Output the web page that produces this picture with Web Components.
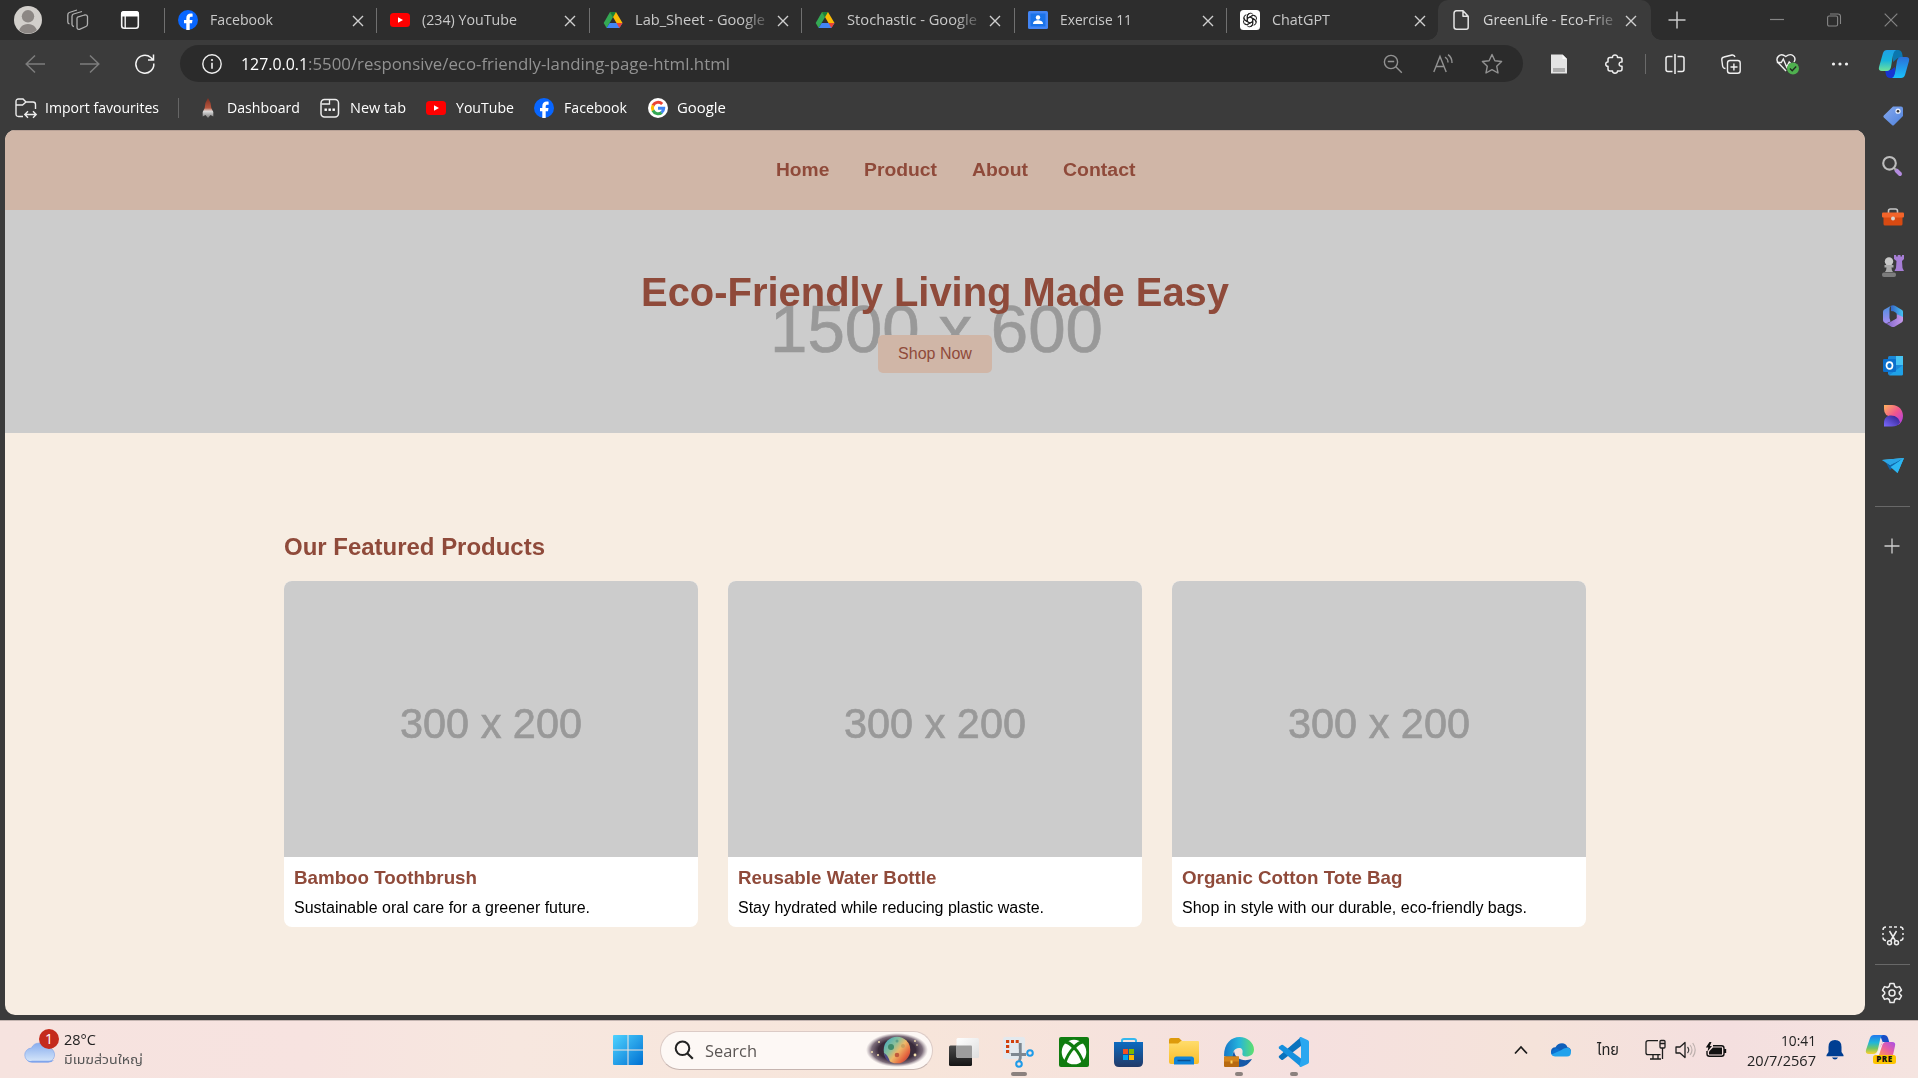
<!DOCTYPE html>
<html lang="en">
<head>
<meta charset="utf-8">
<title>GreenLife - Eco-Friendly Living</title>
<style>
html,body{margin:0;padding:0;height:100%;overflow:hidden;background:#3b3b3b}
body{font-family:"Open Sans","Noto Sans",sans-serif}
</style>
</head>
<body>
<desktop-screen></desktop-screen>
<script>
const ICONS = {
avatar:[28,28,`<defs><clipPath id="c"><circle cx="14" cy="14" r="13.500"/></clipPath></defs><circle cx="14" cy="14" r="14" fill="#d2cfcb"/><g clip-path="url(#c)" fill="#8c8784"><circle cx="14" cy="10.300" r="6.200"/><path d="M4.500 28c0-6 4-10 9.500-10s9.500 4 9.500 10z"/></g>`],
workspaces:[22,22,`<g fill="none" stroke="#b0b0b0" stroke-width="1.300" stroke-linejoin="round"><path d="M10.500 8.200l7-2.200q2.500-.5 3 1.500v7.500q0 2-1.500 2.500l-6.500 2.800q-2.500.500-2.500-2V9.500q0-1 .5-1.300z"/><path d="M7 17.500q-2-.3-2-2V7.500q0-2 1.500-2.500l8.500-2.500"/><path d="M2.500 15Q.8 14.500.8 13V6Q.8 4 2.300 3.500L10 1"/></g>`],
tabact:[20,20,`<rect x="1.700" y="1.700" width="16.600" height="16.600" rx="2.500" fill="none" stroke="#f5f5f5" stroke-width="1.600"/><path d="M1 4Q1 1 4 1h12q3 0 3 3v2.500H1z" fill="#fff"/><path d="M5.200 6v12" stroke="#f5f5f5" stroke-width="1.400"/>`],
facebook:[20,20,`<circle cx="10" cy="10" r="10" fill="#0866ff"/><path d="M8.300 20v-6.800H6v-3.200h2.300V8.600c0-3.500 1.600-5 4.800-5 .6 0 1.200.1 1.500.2v2.900h-1.100c-1.400 0-1.800.5-1.800 1.900V10h2.800l-.5 3.200h-2.300V20z" fill="#fff"/>`],
youtube:[20,20,`<rect x="0" y="3" width="20" height="14" rx="3.500" fill="#f00"/><path d="M8 7.200v5.600l5-2.800z" fill="#fff"/>`],
drive:[20,20,`<path d="M7 2h6l6.500 11h-6z" fill="#fbbc04"/><path d="M7 2l3 5.200L3.600 18 .7 13z" fill="#34a853"/><path d="M3.600 18l3.100-5h12.800l-3.100 5z" fill="#4285f4"/><path d="M13.500 13h6l-3.100 5z" fill="#ea4335"/><path d="M7 2h6l-3 5.200z" fill="#188038"/>`],
classroom:[20,20,`<rect y="1" width="20" height="18" rx="1.500" fill="#4285f4"/><rect x="2.500" y="3.500" width="15" height="13" fill="#1a73e8"/><circle cx="10" cy="7.500" r="2.200" fill="#fff"/><path d="M5 14c0-3 3-3.700 5-3.700s5 .7 5 3.700z" fill="#fff"/>`],
gpt:[20,20,`<rect width="20" height="20" rx="3.500" fill="#fff"/><g fill="none" stroke="#222" stroke-width="1" stroke-linejoin="round"><path id="p" d="M7.300 11.600V6.300q0-3 2.900-3.100 1.600 0 2.600 1.100M7.300 8.400l4.300-2.500q2-1 3.500.3"/><use href="#p" transform="rotate(60 10 10)"/><use href="#p" transform="rotate(120 10 10)"/><use href="#p" transform="rotate(180 10 10)"/><use href="#p" transform="rotate(240 10 10)"/><use href="#p" transform="rotate(300 10 10)"/></g>`],
page:[16,20,`<path d="M3.500.8H10l5.200 5.400v11q0 2-2 2h-9.700q-2.500 0-2.500-2.500v-13Q1 .8 3.500.8zM10 .8v5.400h5.200" fill="none" stroke="#e4e4e4" stroke-width="1.500" stroke-linejoin="round"/>`],
close:[12,12,`<path d="M1 1l10 10M11 1L1 11" stroke="#cfcfcf" stroke-width="1.400"/>`],
plus:[18,18,`<path d="M9 .5v17M.5 9h17" stroke="#c9c9c9" stroke-width="1.500"/>`],
min:[14,14,`<path d="M0 6.500h14" stroke="#858585" stroke-width="1.200"/>`],
restore:[14,14,`<path d="M.6 4.500q0-1.500 1.500-1.500h7q1.500 0 1.500 1.500v7q0 1.500-1.500 1.500h-7Q.6 13 .6 11.500zM3 1h8q2.500 0 2.500 2.500V11" fill="none" stroke="#858585" stroke-width="1.100"/>`],
wclose:[14,14,`<path d="M.7.7l12.600 12.600M13.300.7L.7 13.300" stroke="#858585" stroke-width="1.200"/>`],
back:[20,20,`<path d="M20 10H1.500M10 1.500L1.200 10l8.800 8.500" fill="none" stroke="#7d7d7d" stroke-width="1.500"/>`],
fwd:[20,20,`<path d="M0 10h18.500M10 1.500l8.800 8.500-8.800 8.500" fill="none" stroke="#7d7d7d" stroke-width="1.500"/>`],
refresh:[20,20,`<path d="M18.800 9.500a9 9 0 1 1-3-6l2.200 2.200M18.500.5V6h-5.500" fill="none" stroke="#f4f4f4" stroke-width="1.500"/>`],
info:[20,20,`<circle cx="10" cy="10" r="9.200" fill="none" stroke="#efefef" stroke-width="1.400"/><path d="M10 8.800v6" stroke="#efefef" stroke-width="1.600"/><circle cx="10" cy="6" r="1.100" fill="#efefef"/>`],
zoomout:[20,20,`<g fill="none" stroke="#929292" stroke-width="1.400"><circle cx="8" cy="8" r="6.600"/><path d="M12.800 12.800l6 6M4.800 7.500h6.400"/></g>`],
read:[20,20,`<g fill="none" stroke="#929292" stroke-width="1.400"><path d="M.8 18L7 2.500 13.200 18M3 12.500h8M12 3q3 1.800 3 5.500M15 .6q4 2.600 4 8.400"/></g>`],
star:[22,22,`<path d="M11 1.500l2.900 6.200 6.700.8-4.900 4.700 1.300 6.800-6-3.300L5 20l1.300-6.800-4.900-4.700 6.700-.8z" fill="none" stroke="#929292" stroke-width="1.400" stroke-linejoin="round"/>`],
doc:[18,20,`<path d="M1 .5h11.500L17 5v14.500H1z" fill="#e4e4e4"/><path d="M12.500.5V5H17z" fill="#fafafa"/><path d="M3 15h12M3 17h12" stroke="#777" stroke-width="1"/>`],
puzzle:[20,20,`<path d="M5 3.500h2.500c-.3-3.500 5.300-3.500 5 0H15q2 0 2 2V8c-3.800-.5-3.800 4.800 0 4.300V15q0 2-2 2h-2.500c.3 3-5.300 3-5 0H5q-2 0-2-2v-2.700c-3 .3-3-4.600 0-4.300V5.500q0-2 2-2z" fill="none" stroke="#f0f0f0" stroke-width="1.500" stroke-linejoin="round"/>`],
split:[20,20,`<path d="M7.500 2.500H3q-2 0-2 2v11q0 2 2 2h4.500M12.500 2.500H17q2 0 2 2v11q0 2-2 2h-4.500M10 0v20" fill="none" stroke="#f0f0f0" stroke-width="1.500"/>`],
collect:[20,20,`<g fill="none" stroke="#f0f0f0" stroke-width="1.400"><rect x="6.500" y="6.500" width="12.700" height="12.700" rx="2.500"/><path d="M12.900 9.500v7M9.500 13h7M4.500 14.500Q2 14.500 1.600 12L.8 6Q.5 3.500 3 3l8-2q2.300-.3 3 2"/></g>`],
heart:[23,22,`<path d="M10 18L2 9.500C-1 5 4-1 9.800 3.500 15.500-1 21 4 18 9M.8 9.500h4.500l2-3.500 3.400 8 2.500-5 1.500 1.500" fill="none" stroke="#f0f0f0" stroke-width="1.400"/><circle cx="17" cy="15.500" r="6" fill="#4fb04f"/><path d="M14 15.500l2.200 2.200 4-4.200" fill="none" stroke="#1f2b1f" stroke-width="1.400"/>`],
dots:[18,6,`<g fill="#f0f0f0"><circle cx="2.500" cy="3" r="1.600"/><circle cx="9" cy="3" r="1.600"/><circle cx="15.500" cy="3" r="1.600"/></g>`],
copilot:[30,28,`<defs><linearGradient id="a" x1="0" y1="0" x2="0" y2="1"><stop stop-color="#1f9fe6"/><stop offset=".5" stop-color="#18b4dc"/><stop offset="1" stop-color="#6fe39a"/></linearGradient><linearGradient id="b" x1="0" y1="0" x2="0" y2="1"><stop stop-color="#2b6fd8"/><stop offset="1" stop-color="#19c1fb"/></linearGradient></defs><path d="M14 0h5q3 0 4 3l1 5h-5l-5 4z" fill="#0b76ae"/><path d="M16 28H11q-3 0-4-3l-1-5h6l4-3z" fill="#1735d0"/><path d="M8 0h9q-2 1-2.800 4L12 17q-1 4-4 4H3q-4 0-3-4L4 3q1-3 4-3z" fill="url(#a)"/><path d="M22 28H13q2-1 2.800-4L18 11q1-4 4-4h5q4 0 3 4l-4 14q-1 3-4 3z" fill="url(#b)"/>`],
importf:[22,20,`<path d="M8 18.500H3.500q-2.500 0-2.500-2.500V3.500Q1 1 3.500 1H8l3 3h7q2.500 0 2.500 2.500V11M1 7h6.500L11 4" fill="none" stroke="#ececec" stroke-width="1.400"/><path d="M10 16.500h11M13 13.300l-3.200 3.200 3.200 3.200M18 13.300l3.200 3.200-3.200 3.200" fill="none" stroke="#ececec" stroke-width="1.400"/>`],
rocket:[14,20,`<defs><linearGradient id="a" x1="0" y1="0" x2="0" y2="1"><stop stop-color="#7e2f22"/><stop offset=".5" stop-color="#b9573f"/><stop offset=".66" stop-color="#ddd"/><stop offset="1" stop-color="#777"/></linearGradient></defs><path d="M7 0q3 4 3.300 10l2 4v4.500L9.500 17 7 20l-2.500-3-2.800 1.500V14l2-4Q4 4 7 0z" fill="url(#a)"/>`],
newtab:[20,20,`<rect x="1" y="1.500" width="17.500" height="17.500" rx="3.500" fill="none" stroke="#ececec" stroke-width="1.500"/><path d="M1.500 6h8v-4" fill="none" stroke="#ececec" stroke-width="1.300"/><g fill="#fff"><rect x="4.500" y="10.500" width="2.400" height="2.400"/><rect x="8.500" y="10.500" width="2.400" height="2.400"/><rect x="12.500" y="10.500" width="2.400" height="2.400"/></g>`],
google:[20,20,`<circle cx="10" cy="10" r="10" fill="#fff"/><g fill="none" stroke-width="3"><path d="M14.200 6A5.700 5.700 0 0 0 5 7.500" stroke="#ea4335"/><path d="M5.100 7.300a5.700 5.700 0 0 0 0 5.400" stroke="#fbbc04"/><path d="M5 12.500a5.700 5.700 0 0 0 8.700 2" stroke="#34a853"/><path d="M10 10.200h5.700a5.700 5.700 0 0 1-2.200 4.400" stroke="#4285f4"/></g>`],
tag:[20,20,`<defs><linearGradient id="a" x1="0" y1="0" x2="1" y2="1"><stop stop-color="#86a9ee"/><stop offset="1" stop-color="#4f82dc"/></linearGradient></defs><path d="M10 .5h8q2 0 2 2V10L11 19q-1 1-2 0L.8 11.500q-1-1 0-2z" fill="url(#a)"/><circle cx="15" cy="5.200" r="2.600" fill="#e8eefb"/><circle cx="15" cy="5.200" r="1.300" fill="#333"/>`],
search3:[20,20,`<path d="M14.500 14.500l3.500 3.500" stroke="#b48be0" stroke-width="4" stroke-linecap="round"/><path d="M12 12l2 2" stroke="#aaa" stroke-width="2"/><circle cx="7.500" cy="7.300" r="6.300" fill="none" stroke="#bdbdbd" stroke-width="2.100"/>`],
toolbox:[22,18,`<path d="M6.500 5V3q0-2 2-2h5q2 0 2 2v2" fill="none" stroke="#c6c6c6" stroke-width="1.600"/><rect x="1.500" y="7" width="19" height="10.500" rx="1.500" fill="#d84a12"/><rect x="0" y="4.500" width="22" height="5" rx="1" fill="#f2642a"/><circle cx="11" cy="10.500" r="2" fill="#d9d4cf"/>`],
chess:[22,22,`<path d="M12 0h2.200v1.500h1.500V0h2.800v1.500H20V0h2v4l-2 2 .5 7 1.500 3h-9.500l1.500-3 .5-7-2.500-2z" fill="#a77ed6"/><circle cx="7" cy="6.500" r="4.200" fill="#c8c8c8"/><path d="M2.500 10h9v2.500H9.500q0 3 1.500 4.500H3q1.500-1.500 1.500-4.500h-2z" fill="#aaa"/><rect x="0" y="17.500" width="14" height="4.500" rx="2" fill="#7c7c7c"/>`],
m365:[20,22,`<defs><linearGradient id="a"><stop stop-color="#3566c8"/><stop offset="1" stop-color="#45c3f2"/></linearGradient><linearGradient id="b" x1="0" y1="0" x2="0" y2="1"><stop stop-color="#4a90e0"/><stop offset="1" stop-color="#a88cf0"/></linearGradient><linearGradient id="d"><stop stop-color="#7a62c8"/><stop offset="1" stop-color="#c79aec"/></linearGradient></defs><path d="M8 .8q2-1.300 4 0l7 4.200q1 .6 1 2V13l-6-3.500L12 7 8 6z" fill="url(#a)"/><path d="M8 .8Q6.500 2 6.500 4v9l1 3.500L3 18.500l-2-1.200Q0 16.500 0 15V7q0-1.500 1-2.200z" fill="url(#b)"/><path d="M20 12v3q0 1.500-1 2.200l-7 4.200q-2 1-4 0l-5.500-3.200q2 .5 3.500-.5L13.500 13.500V9z" fill="url(#d)"/><path d="M7 8l3-1.800 3.500 2.200v4.500L10 15l-3-2z" fill="#3b3b3b"/>`],
outlook:[20,20,`<rect x="5" y="0" width="15" height="19" rx="1.500" fill="#1a88d8"/><rect x="13" y="0" width="7" height="9" fill="#46c4f4"/><path d="M20 9v9q0 1.500-1.500 1.500H6z" fill="#1fa2e8"/><rect x="0" y="3" width="13" height="13" rx="1.200" fill="#0b6fcc"/><ellipse cx="6.500" cy="9.500" rx="3" ry="3.400" fill="none" stroke="#fff" stroke-width="1.700"/>`],
designer:[20,22,`<defs><linearGradient id="a" x1="0" y1="0" x2="1" y2="1"><stop stop-color="#ffb35c"/><stop offset=".5" stop-color="#f0568d"/><stop offset="1" stop-color="#a93cf0"/></linearGradient><linearGradient id="b" x1="1" y1="0" x2="0" y2="1"><stop stop-color="#2a1b86"/><stop offset="1" stop-color="#7c6bff"/></linearGradient></defs><path d="M1 0h8c7 0 11 5 11 11 0 4-2 7-4.500 9L12 11.500H9Q1 11.500 1 4z" fill="url(#a)"/><path d="M1 21.500V18c0-5 3-7.500 7-7.500 5 0 8 3 9 7-2 3-4.500 4-8 4z" fill="url(#b)"/>`],
send:[22,16,`<path d="M0 2L22 0l-9 5.500z" fill="#4fd0f8"/><path d="M0 2l8 5.500 14-7.500z" fill="#2aa5e6"/><path d="M8 7.500L22 0 15.500 15z" fill="#2cb6f2"/><path d="M4 5l4 2.500 12-6.500L8 12z" fill="#0c62a8"/><path d="M8.500 9L22 0 15.500 15z" fill="#2cb6f2"/>`],
railplus:[16,16,`<path d="M8 .5v15M.5 8h15" stroke="#d0d0d0" stroke-width="1.300"/>`],
snipweb:[22,20,`<g fill="none" stroke="#ececec" stroke-width="1.500"><path d="M4 14.500q-3 0-3-3M1 9V7M1 4q0-3 3-3M7 1h3M12 1h3M18 1q3 0 3 3M21 7v2M21 11.500q0 3-3 3M7.500 5l6 10M14.500 5l-6 10"/><circle cx="7.500" cy="16.700" r="2"/><circle cx="14.500" cy="16.700" r="2"/></g>`],
gear:[22,22,`<path d="M9 1.500h4l.8 3 1.700 1 3-.9 2 3.500-2.200 2.100v1.600l2.200 2.100-2 3.500-3-.9-1.700 1-.8 3H9l-.8-3-1.700-1-3 .9-2-3.500 2.200-2.100v-1.600L1.500 8.100l2-3.500 3 .9 1.700-1z" fill="none" stroke="#ececec" stroke-width="1.500" stroke-linejoin="round"/><circle cx="11" cy="11" r="3" fill="none" stroke="#ececec" stroke-width="1.500"/>`],
weather:[34,36,`<defs><linearGradient id="a" x1="0" y1="0" x2="0" y2="1"><stop stop-color="#88adee"/><stop offset="1" stop-color="#d7e7fa"/></linearGradient></defs><circle cx="23" cy="17" r="6" fill="#f08a24"/><g transform="translate(1 -3.500)"><path d="M7 30.500a7 7 0 0 1-.5-14A8 8 0 0 1 21 16a7.300 7.300 0 0 1 2.500 14.500z" fill="url(#a)" stroke="#7ea3ea" stroke-width=".6"/><path d="M2 29q2 2 5 2h16q4 0 6-2.500-2 .8-5 .8H7Q4 29.800 2 29z" fill="#7fa4ec"/></g>`],
windows:[30,30,`<defs><linearGradient id="a" x1="0" y1="0" x2="1" y2="1"><stop stop-color="#4fd3ff"/><stop offset="1" stop-color="#0070d2"/></linearGradient></defs><path d="M0 1q0-1 1-1h13.500v14.500H0zM15.500 0H29q1 0 1 1v13.500H15.500zM0 15.500h14.500V30H1q-1 0-1-1zM15.500 15.500H30V29q0 1-1 1H15.500z" fill="url(#a)"/>`],
mag:[20,20,`<circle cx="8.500" cy="8.300" r="6.800" fill="none" stroke="#222" stroke-width="2"/><path d="M13.200 13.200l5.600 5.600" stroke="#222" stroke-width="2.200"/>`],
planet:[62,34,`<defs><radialGradient id="a"><stop offset=".6" stop-color="#3a2b3b"/><stop offset=".82" stop-color="#5c4a5c" stop-opacity=".8"/><stop offset="1" stop-color="#8a7a85" stop-opacity="0"/></radialGradient><linearGradient id="b" x1="0" y1=".1" x2="1" y2=".9"><stop stop-color="#3fa8c0"/><stop offset=".35" stop-color="#8cc09a"/><stop offset=".55" stop-color="#efb868"/><stop offset=".8" stop-color="#e5663f"/><stop offset="1" stop-color="#9c3440"/></linearGradient></defs><rect width="62" height="34" rx="17" fill="url(#a)"/><circle cx="31" cy="17" r="13.300" fill="url(#b)"/><path d="M18 20q4 2 6 9-5-2-6-9z" fill="#4d4a86"/><circle cx="25" cy="14" r="3" fill="#3f8a6a"/><circle cx="37" cy="13" r="2" fill="#c9a05f"/><circle cx="31" cy="22" r="2.300" fill="#c05a3c"/><circle cx="31" cy="8" r="1.500" fill="#5fa08a"/><g fill="#f6e2b0"><circle cx="13" cy="9" r="1"/><circle cx="6" cy="19" r="1"/><circle cx="12" cy="22" r="1"/><circle cx="49" cy="8" r="1"/><circle cx="49" cy="22" r="1.400"/><circle cx="51" cy="12" r=".8"/></g>`],
taskview:[30,30,`<defs><linearGradient id="a" x1="0" y1="0" x2="0" y2="1"><stop stop-color="#4a4a4a"/><stop offset="1" stop-color="#151515"/></linearGradient><linearGradient id="b" x1="0" y1="0" x2="1" y2="1"><stop stop-color="#fff"/><stop offset="1" stop-color="#dedede"/></linearGradient></defs><rect x="0" y="8.500" width="23" height="20.500" rx="1.500" fill="url(#a)"/><rect x="7.500" y="1" width="22.500" height="20" rx="1.500" fill="url(#b)"/><path d="M7.500 8.500H22q1 0 1 1V21H9q-1.500 0-1.500-1.500z" fill="#9d9d9d"/>`],
snip:[32,30,`<rect x="0" y="0" width="22" height="22" rx="2" fill="#e3e9ee"/><g fill="#d2410c"><path d="M3 3h3.200v3H3zM8 3h3v3H8zM12.700 3h3v3h-3zM3 8h3.200v3H3zM3 13h3.200v3H3z"/></g><path d="M16 6v6M6 16.500h6" stroke="#c3c9ce" stroke-width="1"/><path d="M17.300 6v15l-1 3M8 17.500h15" stroke="#7d8790" stroke-width="2.800" fill="none"/><circle cx="27" cy="16" r="2.800" fill="none" stroke="#1e9be9" stroke-width="2"/><circle cx="16" cy="27" r="2.800" fill="none" stroke="#1e9be9" stroke-width="2"/>`],
xbox:[30,30,`<rect width="30" height="30" rx="2" fill="#107c10"/><circle cx="15" cy="15" r="12.300" fill="#fff"/><path d="M5 4.500Q10 5 15 10.500 20 5 25 4.500" fill="none" stroke="#107c10" stroke-width="3.600"/><path d="M5.500 27Q8.500 17 15 10.500 21.500 17 24.500 27" fill="none" stroke="#107c10" stroke-width="3"/>`],
store:[30,30,`<defs><linearGradient id="a" x1="0" y1="0" x2="0" y2="1"><stop stop-color="#0d6bc0"/><stop offset="1" stop-color="#223a68"/></linearGradient></defs><path d="M8 6V3.500q0-1.500 2-1.500h10q2 0 2 1.500V6" fill="none" stroke="#35b8ee" stroke-width="2"/><path d="M0 5h29v20q0 5-5 5H5q-5 0-5-5z" fill="url(#a)"/><path d="M9 12h5v5H9z" fill="#f25022"/><path d="M15 12h5v5h-5z" fill="#7fba00"/><path d="M9 18h5v5H9z" fill="#00a4ef"/><path d="M15 18h5v5h-5z" fill="#ffb900"/>`],
explorer:[30,28,`<defs><linearGradient id="a" x1="0" y1="0" x2="0" y2="1"><stop stop-color="#ffdc6c"/><stop offset="1" stop-color="#f9bd28"/></linearGradient></defs><path d="M0 3q0-2 2-2h8l3 3v4H0z" fill="#dd9a0b"/><path d="M0 6.500h9l3-2.500h17q1 0 1 1v20q0 2-2 2H2q-2 0-2-2z" fill="url(#a)"/><path d="M5 27.500V22q0-2.500 2.500-2.500h15Q25 19.500 25 22v5.500z" fill="#1083d8"/><path d="M8.500 23.500h13" stroke="#0b4f8e" stroke-width="1.500"/>`],
edge:[30,30,`<defs><linearGradient id="a"><stop stop-color="#1677c8"/><stop offset=".5" stop-color="#25b4dc"/><stop offset="1" stop-color="#5fe06c"/></linearGradient></defs><path d="M0 19C0 6 7.500 0 15.500 0S30 6 30 12.500c0 5-4 7-7.500 7S18 18 18.500 16C19 13 18 11 15 11c-5 0-8 5-5 12z" fill="url(#a)"/><path d="M10 14c1 8 9 11 18 8-3 5-7.500 8-12.500 8C8 30 7 20 10 14z" fill="#1559a8"/><rect x="0" y="19.500" width="15" height="10.500" rx="1" fill="#b86a10"/><path d="M0 19.500h15v5H0z" fill="#d3841c"/><rect x="6.500" y="23.500" width="2" height="3" fill="#ffd45c"/>`],
vscode:[30,30,`<path d="M22 0L0 19q-.8 1 .3 2l2 1.700q.8.500 1.700 0L22 9z" fill="#0a72bd"/><path d="M22 30L0 11.500q-.8-1 .3-2L2.300 8q.8-.5 1.700 0L22 21.500z" fill="#1590de"/><path d="M22 0l7 3.300q1 .5 1 1.700v20q0 1.200-1 1.700L22 30q-1 .3-1.500-.8L22 22V8L20.500.8Q21-.3 22 0z" fill="#2aa7f0"/>`],
chevron:[14,10,`<path d="M1 8.500l6-6.500 6 6.500" fill="none" stroke="#1b1b1b" stroke-width="1.700"/>`],
onedrive:[20,14,`<path d="M5 12.500Q0 12.500 0 8.500T4.500 4.300Q6.500.3 11 .3q4 0 5.500 3.900Q20 5 20 8.500z" fill="#0f5fba"/><path d="M3 13q-3-.6-3-4l5-4 13 7z" fill="#0a6fd0"/><path d="M4 13.500q-2 0-3.500-2L10 7.300q3-3 7-2.600 3 .8 3 4.300 0 4.500-4 4.500z" fill="#22a2ec"/>`],
netw:[22,22,`<g fill="none" stroke="#1d1d1d" stroke-width="1.300"><path d="M13 1.700H3q-2 0-2 2v10q0 2 2 2h12.500M5 20h11M8 16v4M13 16v4"/><path d="M15 2.500q0-1 1-1h3q1 0 1 1V8q0 1-1 1h-3q-1 0-1-1zM15 4.500h5M17.500 9v11"/></g>`],
speaker:[22,18,`<path d="M1 6h4l5-4.500v15L5 12H1z" fill="none" stroke="#1d1d1d" stroke-width="1.300" stroke-linejoin="round"/><path d="M12.500 6q2.500 3 0 6" stroke="#444" fill="none" stroke-width="1.200"/><path d="M15 4q4 5 0 10M17.700 2q5 7 0 14" stroke="#bdb1ae" fill="none" stroke-width="1.200"/>`],
battery:[22,18,`<path d="M8 4.700h8.500q2.500 0 2.500 2.500v5.500q0 2.500-2.500 2.500h-12Q2 15.200 2 12.700V10" fill="none" stroke="#111" stroke-width="1.400"/><path d="M8 6.500h9v7H4v-3z" fill="#111"/><path d="M19 8h2.200v4H19z" fill="#111"/><path d="M4.500 1L.8 6.500h2.500L2.500 10.500l4.500-5.500H4.800L6.500 1z" fill="#111"/>`],
bell:[18,20,`<path d="M9 0q6.500 0 6.500 7v5l2 3v1.200H.5V15l2-3V7Q2.500 0 9 0z" fill="#003e92"/><path d="M6 17.500h6q-1 2-3 2t-3-2z" fill="#003e92"/>`],
pre:[30,30,`<defs><linearGradient id="a" x1="0" y1="0" x2="0" y2="1"><stop stop-color="#2278ee"/><stop offset=".4" stop-color="#1fb6d9"/><stop offset=".7" stop-color="#72c566"/><stop offset="1" stop-color="#ffd02b"/></linearGradient><linearGradient id="b" x1="1" y1="0" x2="0" y2="1"><stop stop-color="#a64fe8"/><stop offset=".5" stop-color="#e75fa5"/><stop offset="1" stop-color="#ff9a52"/></linearGradient></defs><path d="M14 0h4q3 0 4 3l1.500 5H17z" fill="#174ec6"/><path d="M8 0h9q-2 1-2.800 4L12 14q-1 5-5 5H3q-4 0-3-4L4 3q1-3 4-3z" fill="url(#a)"/><path d="M20 7h6q4 0 3 4l-2 9H12l3-10q1-3 5-3z" fill="url(#b)"/><path d="M17 7h3q-3 0-4 4l-3 9h-3z" fill="#f7f2f2"/><rect x="7" y="20" width="23" height="9" rx="2.500" fill="#fdc500"/><text x="18.500" y="27.400" font-family="Open Sans" font-weight="800" font-size="8" letter-spacing=".5" text-anchor="middle" fill="#111">PRE</text>`]
};

function define(name, css, html, setup) {
  customElements.define(name, class extends HTMLElement {
    connectedCallback() {
      if (this.shadowRoot) return;
      const root = this.attachShadow({ mode: "open" });
      const markup = typeof html === "function" ? html(this) : html;
      root.innerHTML = `<style>:host{display:block;box-sizing:border-box}*{box-sizing:border-box}${css}</style>${markup}`;
      if (setup) setup(this, root);
    }
  });
}
const icon = (name, ml = 0, extra = "") => `<ui-icon name="${name}" style="margin-left:${ml}px;${extra}"></ui-icon>`;
const fit = (w, text, ml = 0, extra = "") => `<fit-text w="${w}" style="margin-left:${ml}px;${extra}">${text}</fit-text>`;

/* Icon drawn from the shared glyph table */
define("ui-icon", `:host{flex:none;line-height:0}svg{display:block;overflow:visible}`, el => {
  const [w, h, body] = ICONS[el.getAttribute("name")];
  return `<svg width="${w}" height="${h}" viewBox="0 0 ${w} ${h}">${body}</svg>`;
});

define("browser-tab", `
:host{width:212.400px;height:40px;display:flex;align-items:center;flex:none;font-size:15px;color:#c9c9c9;position:relative}
.sep{width:1px;height:25px;background:#707070}
.icon{width:20px;margin-left:13px;display:flex;justify-content:center}
.label{width:131px;margin-left:12px;height:22px;line-height:20px;overflow:hidden;white-space:nowrap}
:host([fade]) .label{-webkit-mask:linear-gradient(90deg,#000 82%,rgba(0,0,0,.25));mask:linear-gradient(90deg,#000 82%,rgba(0,0,0,.25))}
ui-icon.x{margin-left:11px;margin-top:1px}
:host([active]){background:#3b3b3b;border-radius:10px 10px 0 0;color:#d6d6d6}
:host([active]) .sep{background:none}
:host([active]) .icon{margin-left:12px}
:host([active])::before,:host([active])::after{content:"";position:absolute;bottom:0;width:10px;height:10px}
:host([active])::before{left:-10px;background:radial-gradient(circle at 0 0,transparent 9.500px,#3b3b3b 10px)}
:host([active])::after{right:-10px;background:radial-gradient(circle at 100% 0,transparent 9.500px,#3b3b3b 10px)}
`, el => `<span class="sep"></span><span class="icon"><ui-icon name="${el.getAttribute("icon")}"></ui-icon></span><span class="label"><slot></slot></span><ui-icon class="x" name="close"></ui-icon>`);

define("tab-strip", `
:host{height:40px;background:#2d2d2d;display:flex;align-items:center}
.win{margin-left:auto;display:flex;gap:43px;padding-right:20px}
`, `${icon("avatar",14)}${icon("workspaces",25)}${icon("tabact",31)}<span style="width:24px"></span>
<browser-tab icon="facebook">${fit(63,"Facebook")}</browser-tab>
<browser-tab icon="youtube">${fit(95,"(234) YouTube")}</browser-tab>
<browser-tab icon="drive" fade>${fit(130,"Lab_Sheet - Google")}</browser-tab>
<browser-tab icon="drive" fade>${fit(130,"Stochastic - Google")}</browser-tab>
<browser-tab icon="classroom">${fit(72,"Exercise 11")}</browser-tab>
<browser-tab icon="gpt">${fit(58,"ChatGPT")}</browser-tab>
<browser-tab icon="page" active fade>${fit(130,"GreenLife - Eco-Frie")}</browser-tab>
${icon("plus",17.5)}<span class="win">${icon("min")}${icon("restore")}${icon("wclose")}</span>`);

define("address-bar", `
:host{width:1343px;height:37px;border-radius:19px;background:#2b2b2b;display:flex;align-items:center;margin-left:25px;flex:none;font-size:16.800px;color:#929292}
b{font-weight:400;color:#fff}
`, `${icon("info",22)}<b>${fit(67,"127.0.0.1",19)}</b>${fit(422,":5500/responsive/eco-friendly-landing-page-html.html")}
${icon("zoomout",653)}${icon("read",30)}${icon("star",28)}`);

define("tool-bar", `
:host{height:47px;display:flex;align-items:center}
.sep{width:1px;height:20px;background:#6a6a6a;margin-left:20px}
`, `${icon("back",25)}${icon("fwd",35)}${icon("refresh",35)}<address-bar></address-bar>
${icon("doc",27)}${icon("puzzle",37)}<span class="sep"></span>${icon("split",19)}${icon("collect",36)}${icon("heart",35)}${icon("dots",32)}${icon("copilot",29.5)}`);

define("bookmark-item", `
:host{display:flex;align-items:center;flex:none;color:#fff;font-size:15px}
.t{padding-bottom:3px}
`, el => `<ui-icon name="${el.getAttribute("icon")}"></ui-icon><span class="t" style="margin-left:${el.getAttribute("gap") || 10}px"><slot></slot></span>`);

define("bookmark-bar", `
:host{height:43px;display:flex;align-items:center;padding:0 0 1px 15px}
.sep{width:1px;height:20px;background:#666;margin-left:19px}
`, `<bookmark-item icon="importf" gap="8">${fit(114,"Import favourites")}</bookmark-item><span class="sep"></span>
<bookmark-item icon="rocket" gap="12" style="margin-left:22px">${fit(73,"Dashboard")}</bookmark-item>
<bookmark-item icon="newtab" style="margin-left:20px">${fit(56,"New tab")}</bookmark-item>
<bookmark-item icon="youtube" style="margin-left:20px">${fit(58,"YouTube")}</bookmark-item>
<bookmark-item icon="facebook" style="margin-left:20px">${fit(63,"Facebook")}</bookmark-item>
<bookmark-item icon="google" style="margin-left:21px" gap="9">${fit(49,"Google")}</bookmark-item>`);

define("site-nav", `
:host{height:80px;background:#d0b6a7;border-top:1px solid #b9a297;flex:none}
nav{height:77px;padding-left:42px;display:flex;justify-content:center;align-items:center;gap:35px;font:bold 19.200px "Liberation Sans",Arial,sans-serif;color:#8f4a3a}
`, `<nav>${fit(53.300,"Home")}${fit(73,"Product")}${fit(56,"About")}${fit(72.500,"Contact")}</nav>`);

/* Grey stand-in picture labelled with its size */
define("placeholder-image", `
:host{background:#ccc;display:flex;align-items:center;justify-content:center;color:#999;font-family:"Liberation Sans",Arial,sans-serif;-webkit-text-stroke:.7px #999}
`, `<slot></slot>`);

define("shop-hero", `
:host{height:223px;display:grid;flex:none}
:host>*{grid-area:1/1}
.copy{z-index:1;display:flex;flex-direction:column;align-items:center;padding-top:59px;font-family:"Liberation Sans",Arial,sans-serif;color:#8f4a3a}
placeholder-image,.copy{grid-area:1/1}
h1{margin:0;font-size:40px;line-height:46px;height:46px}
button{margin:20px 0 0;width:114px;height:38px;border:0;border-radius:5px;background:#d0b6a7;color:#8f4a3a;font:16px "Liberation Sans",Arial,sans-serif;padding:0}
placeholder-image{font-size:67px;padding:13px 0 0 2px}
`, `<placeholder-image>${fit(333,"1500 x 600")}</placeholder-image><div class="copy"><h1>${fit(588,"Eco-Friendly Living Made Easy")}</h1><button>Shop Now</button></div>`);

define("product-card", `
:host{width:414px;height:346px;border-radius:8px;background:#fff;overflow:hidden;font-family:"Liberation Sans",Arial,sans-serif}
placeholder-image{height:276px;font-size:42px;padding-top:9px}
h3{margin:10px 10px 0;font-size:18.720px;line-height:22px;color:#8f4a3a}
p{margin:10px 10px 0;font-size:16px;line-height:18px;color:#000}
`, `<placeholder-image>${fit(182,"300 x 200")}</placeholder-image><h3><slot name="title"></slot></h3><p><slot></slot></p>`);

define("product-section", `
:host{padding:100px 0 0 279px;font-family:"Liberation Sans",Arial,sans-serif}
h2{margin:0;font-size:24px;line-height:27px;height:48px;color:#8f4a3a}
.grid{display:flex;gap:30px}
`, `<h2>${fit(261,"Our Featured Products")}</h2><div class="grid">
<product-card><span slot="title">${fit(183,"Bamboo Toothbrush")}</span>${fit(296,"Sustainable oral care for a greener future.")}</product-card>
<product-card><span slot="title">${fit(198.500,"Reusable Water Bottle")}</span>${fit(306,"Stay hydrated while reducing plastic waste.")}</product-card>
<product-card><span slot="title">${fit(220.500,"Organic Cotton Tote Bag")}</span>${fit(345,"Shop in style with our durable, eco-friendly bags.")}</product-card></div>`);

define("web-page", `
:host{width:1860px;height:885px;margin-left:5px;border-radius:10px;overflow:hidden;background:#f7ede2;display:flex;flex-direction:column;flex:none}
`, `<site-nav></site-nav><shop-hero></shop-hero><product-section></product-section>`);

define("side-rail", `
:host{width:53px;height:890px;display:flex;flex-direction:column;align-items:center}
.c{width:53px;height:50px;margin:0;display:flex;align-items:center;justify-content:center;padding-left:2px;flex:none}
.sep{width:35px;height:1px;background:#686868;flex:none;margin-left:1px}
.first{margin-top:-39px}
`, `<span class="c first">${icon("tag")}</span><span class="c" style="padding:0 0 1px">${icon("search3")}</span><span class="c">${icon("toolbox",0,"margin-top:2px")}</span><span class="c">${icon("chess")}</span><span class="c">${icon("m365")}</span><span class="c">${icon("outlook")}</span><span class="c" style="height:49px">${icon("designer")}</span><span class="c">${icon("send",0,"margin-top:2px")}</span>
<span class="sep" style="margin-top:16px"></span><span class="c" style="margin-top:14px;padding:0">${icon("railplus")}</span><span style="flex:1"></span><span class="c">${icon("snipweb")}</span><span class="sep" style="margin-top:3px"></span><span class="c" style="margin:3px 0 2px;padding:0 0 1px 1px">${icon("gear")}</span>`);

define("weather-widget", `
:host{display:flex;width:160px;height:58px;padding-left:24px;color:#222}
.pic{position:relative;margin-top:14px}
.badge{position:absolute;left:15px;top:-6px;width:20px;height:20px;border-radius:50%;background:#c42b1c;color:#fff;font-size:14px;line-height:20px;text-align:center}
.txt{margin:9px 0 0 6px;font-size:14.500px;line-height:20px}
.th{font-size:13px;color:#555;font-family:"Noto Sans Thai","Noto Sans","Loma","Waree",sans-serif}
`, `<span class="pic">${icon("weather")}<span class="badge">1</span></span><div class="txt">${fit(32,"28°C")}<div class="th">${fit(79,"มีเมฆส่วนใหญ่")}</div></div>`);

define("search-pill", `
:host{width:273px;height:39px;border-radius:20px;background:#fdf8f5;border:1px solid #dccbc6;border-bottom-color:#c6b5b0;display:flex;align-items:center;font-size:17px;color:#5b5654;flex:none;margin-left:17px}
`, `${icon("mag",13)}${fit(52,"Search",11)}${icon("planet",109)}`);

define("app-button", `
:host{width:55px;height:58px;display:flex;flex-direction:column;align-items:center;flex:none;padding-top:16px}
ui-icon{height:30px}
i{width:8px;height:4px;border-radius:2px;background:#8b817e;margin-top:5px}
:host([state=wide]) i{width:16px}:host(:not([state])) i{display:none}
`, el => `<ui-icon name="${el.getAttribute("icon")}"></ui-icon><i></i>`);

define("task-bar", `
:host{height:58px;display:flex;align-items:center;padding-top:1px;border-top:1px solid #c4b5b1;background:linear-gradient(90deg,#f6e3df 0,#f7e3e0 16%,#f7e7df 27%,#f7e5da 48%,#f5e0df 68%,#f5e3da 80%,#f4dfdf 90%,#f5e4e0 100%)}
.clock{margin-left:19px;width:72px;font-size:15px;line-height:20px;color:#222;display:flex;flex-direction:column;align-items:flex-end;margin-top:-1px}
.th{font:15px "Noto Sans Thai","Noto Sans","Loma","Waree",sans-serif;color:#222}
`, `<weather-widget></weather-widget><span style="width:453px"></span>${icon("windows",0)}<search-pill></search-pill>
<app-button icon="taskview" style="margin-left:3px"></app-button><app-button icon="snip" state="wide"></app-button><app-button icon="xbox"></app-button><app-button icon="store"></app-button><app-button icon="explorer"></app-button><app-button icon="edge" state="dot"></app-button><app-button icon="vscode" state="dot"></app-button>
${icon("chevron",193)}${icon("onedrive",23)}<span class="th">${fit(22,"ไทย",26,"padding-top:1px")}</span>${icon("netw",26)}${icon("speaker",8)}${icon("battery",8)}
<div class="clock" style="margin-left:17px">${fit(35,"10:41")}${fit(69,"20/7/2567")}</div>${icon("bell",10)}${icon("pre",22)}`);

define("desktop-screen", `
:host{width:1918px;height:1078px;overflow:hidden;background:#3b3b3b;display:flex;flex-direction:column}
.main{display:flex;height:890px;flex:none}
`, `<tab-strip></tab-strip><tool-bar></tool-bar><bookmark-bar></bookmark-bar><div class="main"><web-page></web-page><side-rail></side-rail></div><task-bar></task-bar>`);

/* Single line of text condensed or widened to a fixed measure */
define("fit-text", `:host{flex:none;white-space:nowrap}span{display:inline-block;transform-origin:0 50%}`, `<span><slot></slot></span>`, (el, root) => {
  const target = +el.getAttribute("w"), span = root.querySelector("span");
  span.style.transform = `scaleX(${target / span.getBoundingClientRect().width})`;
  el.style.width = target + "px";
});
</script>
</body>
</html>
